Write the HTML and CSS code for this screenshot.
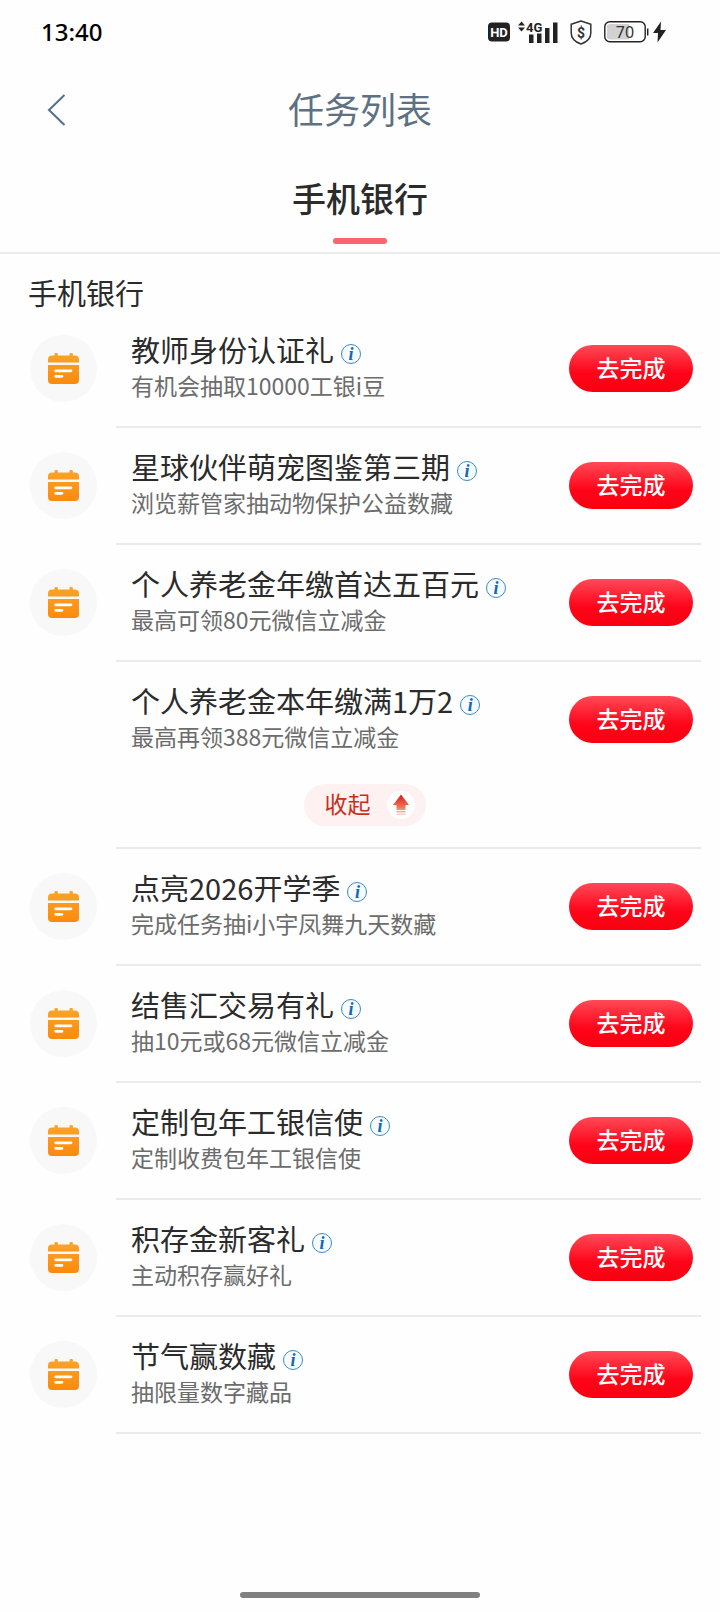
FILE: index.html
```html
<!DOCTYPE html>
<html lang="zh-CN">
<head>
<meta charset="utf-8">
<meta name="viewport" content="width=device-width, initial-scale=1">
<title>任务列表</title>
<link rel="stylesheet" href="styles.css">
</head>
<body>
<svg class="defs" width="0" height="0" aria-hidden="true">
  <defs>
    <linearGradient id="orange" x1="0" y1="0" x2="0" y2="1">
      <stop offset="0" stop-color="#f9a52a"/>
      <stop offset="1" stop-color="#fb8a0c"/>
    </linearGradient>
    <linearGradient id="arrow" x1="0" y1="0" x2="0" y2="1">
      <stop offset="0" stop-color="#d41f14"/>
      <stop offset="0.6" stop-color="#f0705a"/>
      <stop offset="1" stop-color="#fbd5cf"/>
    </linearGradient>
  </defs>
  <symbol id="calendar" viewBox="0 0 31 31">
    <path fill="url(#orange)" d="M0 9.500V6.500Q0 2.500 4 2.500H6.500V1.500a1.700 1.700 0 0 1 3.400 0V2.500H21.500V1.500a1.700 1.700 0 0 1 3.400 0V2.500H27Q31 2.500 31 6.500V9.500ZM0 12H31V27Q31 31 27 31H4Q0 31 0 27Z"/>
    <path d="M7.700 17.800H23M7.700 23.300H14" stroke="#fff" stroke-width="2.800" stroke-linecap="round"/>
  </symbol>
</svg>

<div class="screen">
  <div class="status">
    <span class="time">13:40</span>
    <div class="indicators">
      <svg class="hd" width="22" height="20" viewBox="0 0 22 20"><rect width="22" height="19" y="0.500" rx="4" fill="#222"/><text x="11" y="15" class="hd-text">HD</text></svg>
      <svg class="signal" width="40" height="22" viewBox="0 0 40 22"><path fill="#222" d="M0 4.500 3.500 0.500 7 4.500ZM0 6.500H7L3.500 10.500ZM11 13.500h4.500V22H11ZM19 12.500h4.500V22H19ZM27 7h4.500v15H27ZM35 1.500h4.500V22H35Z"/><text x="8" y="11" class="net-text">4G</text></svg>
      <svg class="shield" width="22" height="25" viewBox="0 0 22 25"><path d="M11 1 20.800 4.300V13C20.800 18.500 16 22.300 11 24 6 22.300 1.200 18.500 1.200 13V4.300Z" fill="none" stroke="#333" stroke-width="1.500" stroke-linejoin="round"/><text x="11" y="17.500" class="dollar-text">$</text></svg>
      <svg class="battery" width="45" height="22" viewBox="0 0 45 22"><rect x="0.800" y="0.800" width="40.400" height="20" rx="5" fill="#fff" stroke="#222" stroke-width="1.400"/><path d="M6 3H25V18.600H6Q3 18.600 3 15.600V6Q3 3 6 3Z" fill="#d2d2d2"/><path d="M43.700 7.500V14.500" stroke="#222" stroke-width="1.500"/><text x="21" y="16.500" class="battery-text">70</text></svg>
      <svg class="bolt" width="13" height="22" viewBox="0 0 13 22"><path d="M8 0.500 0 12H5L4.500 21.500 13 9H7.500Z" fill="#222"/></svg>
    </div>
  </div>

  <header class="nav">
    <button class="back" type="button" aria-label="返回"><svg width="20" height="34" viewBox="0 0 20 34"><path d="M18.500 2 3 17 18.500 32" fill="none" stroke="#54708a" stroke-width="2"/></svg></button>
    <h1 class="nav-title">任务列表</h1>
  </header>

  <nav class="tabs"><button class="tab" type="button">手机银行</button></nav>

  <main class="tasks">
    <h2 class="section-title">手机银行</h2>
    <ul class="list">
      <li class="item"><div class="row">
        <span class="badge"><svg class="cal"><use href="#calendar"/></svg></span>
        <div class="text"><h3 class="name">教师身份认证礼<button class="info" type="button">i</button></h3><p class="desc">有机会抽取10000工银i豆</p></div>
        <button class="go" type="button">去完成</button></div></li>
      <li class="item"><div class="row">
        <span class="badge"><svg class="cal"><use href="#calendar"/></svg></span>
        <div class="text"><h3 class="name">星球伙伴萌宠图鉴第三期<button class="info" type="button">i</button></h3><p class="desc">浏览薪管家抽动物保护公益数藏</p></div>
        <button class="go" type="button">去完成</button></div></li>
      <li class="item"><div class="row">
        <span class="badge"><svg class="cal"><use href="#calendar"/></svg></span>
        <div class="text"><h3 class="name">个人养老金年缴首达五百元<button class="info" type="button">i</button></h3><p class="desc">最高可领80元微信立减金</p></div>
        <button class="go" type="button">去完成</button></div></li>
      <li class="item"><div class="row">
        <span class="badge badge-empty"></span>
        <div class="text"><h3 class="name">个人养老金本年缴满1万2<button class="info" type="button">i</button></h3><p class="desc">最高再领388元微信立减金</p></div>
        <button class="go" type="button">去完成</button></div>
        <button class="fold" type="button"><span class="fold-label">收起</span><svg width="28" height="28" viewBox="0 0 28 28"><circle cx="14" cy="14" r="14" fill="#fff"/><path d="M14 3.500 22 14H18.500V19H9.500V14H6ZM9.500 20H18.500V21.500H9.500ZM9.500 22.500H18.500V24H9.500Z" fill="url(#arrow)"/></svg></button></li>
      <li class="item"><div class="row">
        <span class="badge"><svg class="cal"><use href="#calendar"/></svg></span>
        <div class="text"><h3 class="name">点亮2026开学季<button class="info" type="button">i</button></h3><p class="desc">完成任务抽i小宇凤舞九天数藏</p></div>
        <button class="go" type="button">去完成</button></div></li>
      <li class="item"><div class="row">
        <span class="badge"><svg class="cal"><use href="#calendar"/></svg></span>
        <div class="text"><h3 class="name">结售汇交易有礼<button class="info" type="button">i</button></h3><p class="desc">抽10元或68元微信立减金</p></div>
        <button class="go" type="button">去完成</button></div></li>
      <li class="item"><div class="row">
        <span class="badge"><svg class="cal"><use href="#calendar"/></svg></span>
        <div class="text"><h3 class="name">定制包年工银信使<button class="info" type="button">i</button></h3><p class="desc">定制收费包年工银信使</p></div>
        <button class="go" type="button">去完成</button></div></li>
      <li class="item"><div class="row">
        <span class="badge"><svg class="cal"><use href="#calendar"/></svg></span>
        <div class="text"><h3 class="name">积存金新客礼<button class="info" type="button">i</button></h3><p class="desc">主动积存赢好礼</p></div>
        <button class="go" type="button">去完成</button></div></li>
      <li class="item"><div class="row">
        <span class="badge"><svg class="cal"><use href="#calendar"/></svg></span>
        <div class="text"><h3 class="name">节气赢数藏<button class="info" type="button">i</button></h3><p class="desc">抽限量数字藏品</p></div>
        <button class="go" type="button">去完成</button></div></li>
    </ul>
  </main>
  <div class="home-bar"></div>
</div>
</body>
</html>
```
FILE: styles.css
```css
* { box-sizing: border-box; }
body {
  margin: 0;
  background: #fefefe;
  color: #2b2b2b;
  font-family: "Noto Sans CJK SC", sans-serif;
}
h1, h2, h3, p, ul { margin: 0; padding: 0; font-weight: 400; }
ul { list-style: none; }
button {
  margin: 0;
  padding: 0;
  border: 0;
  background: none;
  color: inherit;
  font: inherit;
  cursor: pointer;
}
svg { display: block; flex: none; }
.defs { position: absolute; }
.screen { display: flex; flex-direction: column; min-height: 100vh; }

.status {
  display: flex;
  align-items: center;
  justify-content: space-between;
  height: 66px;
  padding: 0 54px 2px 41px;
}
.time { color: #000; font: 500 24px/32px "Noto Sans", sans-serif; }
.indicators { display: flex; align-items: center; }
.signal { margin-left: 8px; }
.shield, .battery { margin-left: 12px; }
.bolt { margin-left: 4px; }
.hd-text { fill: #fff; font: 700 13px Roboto, sans-serif; text-anchor: middle; }
.net-text { fill: #222; font: 700 13px Roboto, sans-serif; stroke: #fefefe; stroke-width: 1px; paint-order: stroke; }
.dollar-text { fill: #333; font: 700 14px Roboto, sans-serif; text-anchor: middle; }
.battery-text { fill: #333; font: 400 16px "Noto Sans", sans-serif; text-anchor: middle; }

.nav {
  display: grid;
  grid-template-columns: 1fr auto 1fr;
  align-items: center;
  height: 88px;
  padding: 0 46px;
  color: #5d7183;
}
.back { justify-self: start; }
.nav-title { padding-bottom: 4px; font-size: 36px; line-height: 52px; }

.tabs { display: flex; justify-content: center; border-bottom: 2px solid #ebebeb; }
.tab {
  display: flex;
  flex-direction: column;
  align-items: center;
  padding: 19px 0 8px;
  color: #2b2b2b;
  font-size: 34px;
  font-weight: 500;
  line-height: 50px;
}
.tab::after {
  content: "";
  width: 54px;
  height: 6px;
  margin-top: 15px;
  border-radius: 3px;
  background: #fb646c;
}

.tasks { flex: 1; padding: 19px 19px 0 28px; }
.section-title { font-size: 29px; line-height: 38px; }
.item {
  display: flex;
  flex-direction: column;
  background: linear-gradient(#ebebeb, #ebebeb) 88px 100% / 100% 2px no-repeat;
  padding-bottom: 2px;
}
.row { display: flex; align-items: center; height: 115px; padding: 0 8px 0 2px; }
.badge {
  display: flex;
  flex: none;
  align-items: center;
  justify-content: center;
  width: 67px;
  height: 67px;
  margin-right: 34px;
  border-radius: 50%;
  background: #f8f8f8;
}
.badge-empty { background: none; }
.cal { width: 31px; height: 31px; }
.text { flex: 1; min-width: 0; padding-bottom: 6px; }
.name { display: flex; align-items: center; gap: 7px; font-size: 29px; line-height: 38px; }
.info {
  width: 20px;
  height: 20px;
  margin-top: 10px;
  border: 1px solid #3d8ac6;
  border-radius: 50%;
  background: #f6fbff;
  color: #1268b3;
  font: italic 700 18px/18px "Liberation Serif", serif;
}
.desc { color: #6c6c6c; font-size: 23px; line-height: 34px; }
.go {
  flex: none;
  width: 124px;
  height: 47px;
  padding-bottom: 4px;
  border-radius: 24px;
  background: linear-gradient(#ff4a56, #fe0419 60%, #f90010);
  color: #fff;
  font-size: 23px;
  font-weight: 500;
  line-height: 34px;
}
.fold {
  display: flex;
  align-items: center;
  align-self: center;
  gap: 16px;
  height: 42px;
  margin: 7px 0 21px;
  padding: 0 11px 0 21px;
  border-radius: 21px;
  background: #fef1f1;
  color: #c9301c;
  font-size: 23px;
  line-height: 34px;
}
.fold-label { padding-bottom: 4px; }
.home-bar {
  align-self: center;
  width: 33.333%;
  height: 6px;
  margin-bottom: 14px;
  border-radius: 3px;
  background: #808080;
}
```
